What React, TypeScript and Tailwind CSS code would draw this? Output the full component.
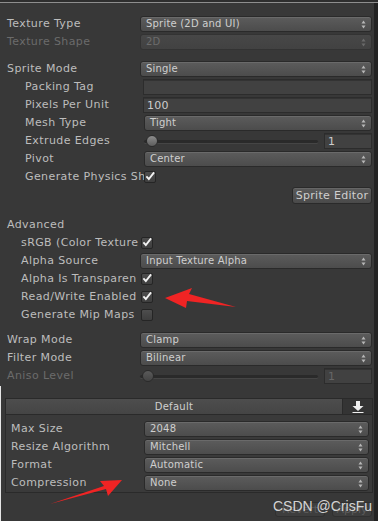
import type { ReactNode } from "react";

// Unity texture import inspector (dark skin), with two red annotation arrows.

type Kind = "top" | "sprite" | "adv" | "box";

const LABEL_CLS: Record<Kind, string> = {
  top: "pl-[7px] w-[140px]",
  sprite: "pl-[25px] w-[144px]",
  adv: "pl-[21px] w-[140px]",
  box: "pl-[5px] w-[138px]",
};

const font = { fontFamily: '"DejaVu Sans", Verdana, sans-serif' };

function Row({
  label,
  kind = "top",
  disabled,
  children,
  className = "",
}: {
  label: string;
  kind?: Kind;
  disabled?: boolean;
  children?: ReactNode;
  className?: string;
}) {
  return (
    <div className={`flex h-[18px] items-center ${className}`}>
      <span
        className={`${LABEL_CLS[kind]} shrink-0 whitespace-nowrap text-[11px] leading-[18px] tracking-[0.4px] ${
          disabled ? "text-[#6b6b6b]" : "text-[#bdbdbd]"
        }`}
      >
        {label}
      </span>
      <div className="flex min-w-0 flex-1 items-center">{children}</div>
    </div>
  );
}

function Arrows({ disabled }: { disabled?: boolean }) {
  const c = disabled ? "#6a6a6a" : "#b8b8b8";
  return (
    <svg width="5" height="9" viewBox="0 0 5 9" className="shrink-0">
      <path d="M2.5 0.5 L4.5 3.5 L0.5 3.5 Z" fill={c} />
      <path d="M2.5 8.5 L4.5 5.5 L0.5 5.5 Z" fill={c} />
    </svg>
  );
}

function Dropdown({ value, disabled }: { value: string; disabled?: boolean }) {
  return (
    <div
      className={`flex h-[16px] flex-1 items-center justify-between rounded-[3px] border pl-[5px] pr-[5px] ${
        disabled
          ? "border-[#333333] bg-gradient-to-b from-[#474747] to-[#424242] text-[#6c6c6c]"
          : "border-[#2a2a2a] bg-gradient-to-b from-[#5c5c5c] to-[#4c4c4c] text-[#cfcfcf] shadow-[inset_0_1px_0_#6a6a6a]"
      }`}
    >
      <span className="whitespace-nowrap text-[10px] leading-none tracking-[0.2px]">{value}</span>
      <Arrows disabled={disabled} />
    </div>
  );
}

function Field({ value = "", disabled, className = "flex-1" }: { value?: string; disabled?: boolean; className?: string }) {
  return (
    <div
      className={`flex h-[16px] items-center border border-[#2c2c2c] bg-[#414141] px-[3px] shadow-[inset_0_1px_0_#333333] ${className}`}
    >
      <span className={`text-[11px] leading-none tracking-[0.3px] ${disabled ? "text-[#676767]" : "text-[#cdcdcd]"}`}>
        {value}
      </span>
    </div>
  );
}

function Check({ on }: { on?: boolean }) {
  return (
    <div className="flex h-[12px] w-[12px] items-center justify-center rounded-[2px] border border-[#252525] bg-gradient-to-b from-[#4e4e4e] to-[#3e3e3e]">
      {on && (
        <svg width="11" height="10" viewBox="0 0 11 10" className="-mt-[2px]">
          <path d="M1.5 5.5 L4.2 8.3 L10 1" stroke="#f2f2f2" strokeWidth="2" fill="none" />
        </svg>
      )}
    </div>
  );
}

function Slider({ disabled }: { disabled?: boolean }) {
  return (
    <div className="flex flex-1 items-center gap-[6px]">
      <div className="relative flex h-[12px] flex-1 items-center">
        <div className="h-[3px] w-full rounded-full bg-[#2a2a2a] shadow-[0_1px_0_#454545]" />
        <div
          className={`absolute left-[2px] top-0 h-[12px] w-[12px] rounded-full border border-[#2a2a2a] ${
            disabled ? "bg-gradient-to-b from-[#5a5a5a] to-[#444444]" : "bg-gradient-to-b from-[#8c8c8c] to-[#5e5e5e]"
          }`}
        />
      </div>
      <Field value="1" disabled={disabled} className="w-[48px]" />
    </div>
  );
}

export default function App() {
  return (
    <div className="relative h-[521px] w-[378px] overflow-hidden bg-[#383838]" style={font}>
      <div className="h-[2px] bg-[#2e2e2e]" />
      <div className="h-[1px] bg-[#8e8e8e]" />
      <div className="absolute bottom-0 right-0 top-[3px] w-[4px] bg-[#232323]" />
      <div className="absolute bottom-0 left-0 top-[386px] w-[1px] bg-[#e6e6e6]" />

      <div className="pr-[6px] pt-[12px]">
        <Row label="Texture Type">
          <Dropdown value="Sprite (2D and UI)" />
        </Row>
        <Row label="Texture Shape" disabled>
          <Dropdown value="2D" disabled />
        </Row>

        <Row label="Sprite Mode" className="mt-[9px]">
          <Dropdown value="Single" />
        </Row>
        <Row label="Packing Tag" kind="sprite">
          <Field className="-ml-[1px] flex-1" />
        </Row>
        <Row label="Pixels Per Unit" kind="sprite">
          <Field value="100" className="-ml-[1px] flex-1" />
        </Row>
        <Row label="Mesh Type" kind="sprite">
          <Dropdown value="Tight" />
        </Row>
        <Row label="Extrude Edges" kind="sprite">
          <Slider />
        </Row>
        <Row label="Pivot" kind="sprite">
          <Dropdown value="Center" />
        </Row>
        <Row label="Generate Physics Sh" kind="sprite">
          <Check on />
        </Row>
        <div className="flex h-[18px] items-center justify-end">
          <div className="flex h-[17px] w-[80px] items-center justify-center rounded-[3px] border border-[#2a2a2a] bg-gradient-to-b from-[#5a5a5a] to-[#4a4a4a] shadow-[inset_0_1px_0_#666666]">
            <span className="text-[11px] leading-none tracking-[0.3px] text-[#cfcfcf]">Sprite Editor</span>
          </div>
        </div>

        <Row label="Advanced" className="mt-[12px]" />
        <Row label="sRGB (Color Texture" kind="adv">
          <div className="ml-[1px]">
            <Check on />
          </div>
        </Row>
        <Row label="Alpha Source" kind="adv">
          <Dropdown value="Input Texture Alpha" />
        </Row>
        <Row label="Alpha Is Transparen" kind="adv">
          <div className="ml-[1px]">
            <Check on />
          </div>
        </Row>
        <Row label="Read/Write Enabled" kind="adv">
          <div className="ml-[1px]">
            <Check on />
          </div>
        </Row>
        <Row label="Generate Mip Maps" kind="adv">
          <div className="ml-[1px]">
            <Check />
          </div>
        </Row>

        <Row label="Wrap Mode" className="mt-[7px]">
          <Dropdown value="Clamp" />
        </Row>
        <Row label="Filter Mode">
          <Dropdown value="Bilinear" />
        </Row>
        <Row label="Aniso Level" disabled>
          <Slider disabled />
        </Row>
      </div>

      <div className="ml-[5px] mr-[5px] mt-[13px]">
        <div className="flex h-[17px] border border-[#2a2a2a] bg-gradient-to-b from-[#4d4d4d] to-[#454545]">
          <div className="flex flex-1 items-center justify-center">
            <span className="text-[10px] leading-none tracking-[0.3px] text-[#cfcfcf]">Default</span>
          </div>
          <div className="flex w-[30px] items-center justify-center border-l border-[#2a2a2a] bg-[#343434]">
            <svg width="12" height="12" viewBox="0 0 12 12">
              <rect x="4" y="0" width="4" height="5" fill="#f0f0f0" />
              <path d="M0.5 5 L11.5 5 L6 10 Z" fill="#f0f0f0" />
              <rect x="0.5" y="11" width="11" height="1" fill="#f0f0f0" />
            </svg>
          </div>
        </div>
        <div className="border border-t-0 border-[#2a2a2a] bg-[#3a3a3a] pb-[0px] pr-[3px] pt-[5px]">
          <Row label="Max Size" kind="box">
            <Dropdown value="2048" />
          </Row>
          <Row label="Resize Algorithm" kind="box">
            <Dropdown value="Mitchell" />
          </Row>
          <Row label="Format" kind="box">
            <Dropdown value="Automatic" />
          </Row>
          <Row label="Compression" kind="box">
            <Dropdown value="None" />
          </Row>
        </div>
      </div>

      <div className="mt-[9px] flex justify-end gap-[7px] pr-[6px]">
        <div className="flex h-[15px] w-[50px] items-center justify-center rounded-[3px] border border-[#303030] bg-[#3e3e3e]">
          <span className="text-[11px] leading-none text-[#5c5c5c]">Revert</span>
        </div>
        <div className="flex h-[15px] w-[40px] items-center justify-center rounded-[3px] border border-[#303030] bg-[#3e3e3e]">
          <span className="text-[11px] leading-none text-[#5c5c5c]">Apply</span>
        </div>
      </div>

      <svg className="pointer-events-none absolute left-0 top-0" width="378" height="521" viewBox="0 0 378 521">
        <path d="M165 298 L192 288 L189 294 L236 307 L187 301 L186 308 Z" fill="#f02424" />
        <path d="M122 480 L100 481 L104 486 L50 504 L106 489 L108 496 Z" fill="#f02424" />
      </svg>

      <span
        className="absolute left-[273px] top-[499px] whitespace-nowrap text-[14px] leading-none text-[#e8e8e8]/90"
        style={{ fontFamily: '"Liberation Sans", Arial, sans-serif' }}
      >
        CSDN @CrisFu
      </span>
    </div>
  );
}
